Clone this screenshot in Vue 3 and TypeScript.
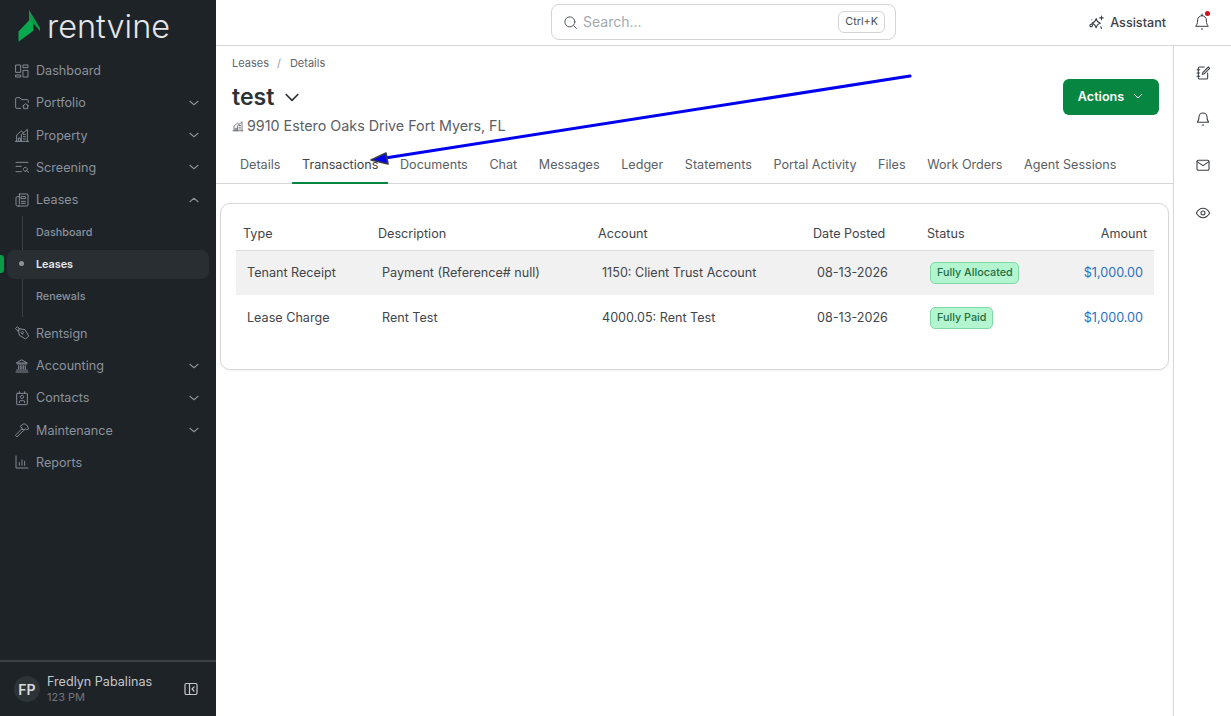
<script setup lang="ts">
// Lease details page, Transactions tab.

interface NavItem {
  label: string;
  icon: string;
  chevron?: "down" | "up";
  children?: { label: string; active?: boolean }[];
}

const icons: Record<string, string> = {
  dashboard: "M3 3h7v11H3zM3 18h7v3H3zM14 3h7v4h-7zM14 11h7v10h-7z",
  portfolio:
    "M10 20H4a1.500 1.500 0 0 1-1.500-1.500v-13A1.500 1.500 0 0 1 4 4h5l2.500 3H20a1.500 1.500 0 0 1 1.500 1.500V11M13 16.500l4.500-3.500 4.500 3.500M14.500 15.500V20.500h6v-5",
  property:
    "M2 21.500h20M4 21.500V12l7-6 3 2.500M6.500 21.500v-5h3v5M11 21.500v-10l9-8v18M14 11h3M14 14.500h3M14 18h3",
  screening:
    "M3 5h18M3 11h8M3 19h8M17 18.500a3 3 0 1 0-.01 0M19.300 17.500 22 20",
  leases:
    "M8 3h11.500A1.500 1.500 0 0 1 21 4.500v15a1.500 1.500 0 0 1-1.500 1.500H6.500M8 3v15M8 21H5a2 2 0 0 1-2-2V9a2 2 0 0 1 2-2h3M11 7h6v3h-6zM11 14h6M11 17h6",
  rentsign:
    "M2.500 5 5 2.500 9 6.500 6.500 9zM7.500 5.500l9 1.500 5.500 9.500-4.500 4.500-9.500-5.500L6.500 7M12.500 13.500a1.800 1.800 0 1 0-.01 0",
  accounting:
    "M3 21h18M4 18h16M5 9h14M12 3l8 4.500H4zM7 11.500V16M12 11.500V16M17 11.500V16M9.500 11.500V16M14.500 11.500V16",
  contacts:
    "M5 5h14a1 1 0 0 1 1 1v15a1 1 0 0 1-1 1H5a1 1 0 0 1-1-1V6a1 1 0 0 1 1-1zM8 2.500V5M16 2.500V5M12 13a2.500 2.500 0 1 0-.01 0M8 19v-1a2 2 0 0 1 2-2h4a2 2 0 0 1 2 2v1",
  maintenance:
    "M2.500 19.500 12 10l2.500 2.500L5 22zM10 6l4-3c3-.5 5 1 6 3l2 4-3 2-2-2-2 2z",
  reports: "M3 3v18h18M8 17v-4M12 17V9M16 17v-6",
};

const nav: NavItem[] = [
  { label: "Dashboard", icon: "dashboard" },
  { label: "Portfolio", icon: "portfolio", chevron: "down" },
  { label: "Property", icon: "property", chevron: "down" },
  { label: "Screening", icon: "screening", chevron: "down" },
  {
    label: "Leases",
    icon: "leases",
    chevron: "up",
    children: [
      { label: "Dashboard" },
      { label: "Leases", active: true },
      { label: "Renewals" },
    ],
  },
  { label: "Rentsign", icon: "rentsign" },
  { label: "Accounting", icon: "accounting", chevron: "down" },
  { label: "Contacts", icon: "contacts", chevron: "down" },
  { label: "Maintenance", icon: "maintenance", chevron: "down" },
  { label: "Reports", icon: "reports" },
];

const tabs = [
  "Details",
  "Transactions",
  "Documents",
  "Chat",
  "Messages",
  "Ledger",
  "Statements",
  "Portal Activity",
  "Files",
  "Work Orders",
  "Agent Sessions",
];

const rows = [
  {
    type: "Tenant Receipt",
    description: "Payment (Reference# null)",
    account: "1150: Client Trust Account",
    date: "08-13-2026",
    status: "Fully Allocated",
    amount: "$1,000.00",
  },
  {
    type: "Lease Charge",
    description: "Rent Test",
    account: "4000.05: Rent Test",
    date: "08-13-2026",
    status: "Fully Paid",
    amount: "$1,000.00",
  },
];
</script>

<template>
  <div class="app">
    <aside class="sidebar">
      <div class="logo">
        <svg class="logo-mark" width="23" height="32" viewBox="0 0 23 32">
          <path d="M11 0V10.500L.5 21.500V31.700L15.300 20.700V13.300Z" fill="#0aa84f" />
          <path d="M11 0 22 18V21L15.300 13.300 11 10.500Z" fill="#0b9c4a" />
        </svg>
        <span class="logo-text">rentvine</span>
      </div>
      <nav class="nav">
        <template v-for="item in nav" :key="item.label">
          <div class="nav-item">
            <svg class="nav-icon" width="16" height="16" viewBox="0 0 24 24">
              <path :d="icons[item.icon]" />
            </svg>
            <span class="nav-label">{{ item.label }}</span>
            <svg v-if="item.chevron" class="nav-chevron" width="14" height="14" viewBox="0 0 24 24">
              <path :d="item.chevron === 'down' ? 'M5 9l7 6 7-6' : 'M5 15l7-6 7 6'" />
            </svg>
          </div>
          <div v-if="item.children" class="subnav">
            <div
              v-for="child in item.children"
              :key="child.label"
              :class="['sub-item', { active: child.active }]"
            >
              <span v-if="child.active" class="sub-marker"></span>
              <span v-if="child.active" class="sub-dot"></span>
              {{ child.label }}
            </div>
          </div>
        </template>
      </nav>
      <div class="user">
        <div class="avatar">FP</div>
        <div class="user-text">
          <div class="user-name">Fredlyn Pabalinas</div>
          <div class="user-time">123 PM</div>
        </div>
        <svg class="collapse" width="14" height="14" viewBox="0 0 14 14">
          <rect x="1" y="1.500" width="12" height="11" rx="1.200" />
          <path d="M5.500 1.500v11M10 5 8 7l2 2" />
        </svg>
      </div>
    </aside>

    <div class="main">
      <header class="topbar">
        <div class="search">
          <svg class="search-icon" width="15" height="15" viewBox="0 0 24 24">
            <circle cx="11" cy="11" r="8" />
            <path d="M17 17l4.500 4.500" />
          </svg>
          <span class="search-text">Search...</span>
          <span class="kbd">Ctrl+K</span>
        </div>
        <div class="top-actions">
          <div class="assistant">
            <svg width="17" height="17" viewBox="0 0 24 24">
              <path d="M11.500 6.500c.8 4 2.200 5.400 6 6.500-3.800 1.100-5.200 2.500-6 6.500-.8-4-2.200-5.400-6-6.500 3.800-1.100 5.200-2.500 6-6.500zM19 3v5M16.500 5.500h5M4.500 18a1.800 1.800 0 1 0-.01 0M5.500 8v.01M18 18l1 2.500" />
            </svg>
            Assistant
          </div>
          <div class="bell">
            <svg width="16" height="18" viewBox="0 0 24 27">
              <path d="M12 4a6.500 6.500 0 0 1 6.500 6.500c0 5.500 1.500 7.500 3 9.500h-19c1.500-2 3-4 3-9.500A6.500 6.500 0 0 1 12 4zM12 1.500V4M11 24h2" />
            </svg>
            <span class="bell-dot"></span>
          </div>
        </div>
      </header>

      <div class="body">
        <main class="content">
          <div class="head">
            <div class="crumbs">
              <span>Leases</span>
              <span class="crumb-sep">/</span>
              <span>Details</span>
            </div>
            <div class="title-row">
              <div>
                <div class="title">
                  test
                  <svg width="20" height="20" viewBox="0 0 24 24"><path d="M5 9l7 7 7-7" /></svg>
                </div>
                <div class="address">
                  <svg width="12" height="12" viewBox="0 0 24 24">
                    <path d="M2 21.500h20M4 21.500V12l7-6 3 2.500M6.500 21.500v-5h3v5M11 21.500v-10l9-8v18M14 11h3M14 14.500h3M14 18h3" />
                  </svg>
                  9910 Estero Oaks Drive Fort Myers, FL
                </div>
              </div>
              <button class="actions">
                Actions
                <svg width="12" height="12" viewBox="0 0 24 24"><path d="M5 9l7 7 7-7" /></svg>
              </button>
            </div>
          </div>

          <div class="tabs">
            <div v-for="tab in tabs" :key="tab" :class="['tab', { active: tab === 'Transactions' }]">
              {{ tab }}
            </div>
          </div>

          <section class="card">
            <table class="table">
              <colgroup>
                <col style="width: 135px" />
                <col style="width: 220px" />
                <col style="width: 215px" />
                <col style="width: 114px" />
                <col />
              </colgroup>
              <thead>
                <tr>
                  <th>Type</th>
                  <th>Description</th>
                  <th>Account</th>
                  <th>Date Posted</th>
                  <th>Status</th>
                  <th class="right">Amount</th>
                </tr>
              </thead>
              <tbody>
                <tr v-for="row in rows" :key="row.type">
                  <td>{{ row.type }}</td>
                  <td>{{ row.description }}</td>
                  <td>{{ row.account }}</td>
                  <td>{{ row.date }}</td>
                  <td><span class="pill">{{ row.status }}</span></td>
                  <td class="right amount">{{ row.amount }}</td>
                </tr>
              </tbody>
            </table>
          </section>
        </main>

        <aside class="rail">
          <svg width="16" height="16" viewBox="0 0 24 24">
            <path d="M14 3H7a2 2 0 0 0-2 2v14a2 2 0 0 0 2 2h10a2 2 0 0 0 2-2v-7M3 7h4M3 12h4M3 17h4M20 3l2 2-8 8-3 1 1-3z" />
          </svg>
          <svg width="16" height="16" viewBox="0 0 24 24">
            <path d="M12 3a6 6 0 0 1 6 6c0 5 2 7 2.500 8h-17C4 16 6 14 6 9a6 6 0 0 1 6-6zM11 21h2" />
          </svg>
          <svg width="16" height="16" viewBox="0 0 24 24">
            <rect x="3" y="5" width="18" height="15" rx="2" />
            <path d="M3 7l9 6 9-6" />
          </svg>
          <svg width="16" height="16" viewBox="0 0 24 24">
            <path d="M2 12c2.500-4.500 6-7 10-7s7.500 2.500 10 7c-2.500 4.500-6 7-10 7s-7.500-2.500-10-7z" />
            <circle cx="12" cy="12" r="3" />
          </svg>
        </aside>
      </div>
    </div>

    <!-- annotation drawn over the screenshot -->
    <svg class="arrow" width="1231" height="716" viewBox="0 0 1231 716">
      <path d="M910 76 382 158.500" stroke="#0000f0" stroke-width="3" fill="none" />
      <path d="M371 160 386 153 388 164Z" fill="#0000f0" />
    </svg>
  </div>
</template>

<style>
html,
body {
  margin: 0;
  background: #fff;
}
</style>

<style scoped>
.app {
  position: relative;
  display: flex;
  width: 1231px;
  height: 716px;
  overflow: hidden;
  font-family: Inter, "Liberation Sans", sans-serif;
  font-size: 12.6px;
  color: #3a3f45;
}
svg {
  fill: none;
  stroke: currentColor;
  stroke-width: 1.6;
  stroke-linecap: round;
  stroke-linejoin: round;
  flex: none;
}

/* sidebar */
.sidebar {
  width: 216px;
  flex: none;
  background: #1e2328;
  display: flex;
  flex-direction: column;
  color: #8b929c;
}
.logo {
  height: 54.4px;
  display: flex;
  align-items: center;
  padding-left: 18px;
  gap: 6px;
}
.logo-mark {
  stroke: none;
  margin-top: -2px;
}
.logo-text {
  font-weight: 300;
  font-size: 32.5px;
  color: #e4e6e8;
  line-height: 1;
}
.nav {
  flex: 1;
}
.nav-item {
  height: 32.3px;
  display: flex;
  align-items: center;
  padding: 0 15px 0 14px;
}
.nav-icon {
  stroke-width: 1.4;
}
.nav-label {
  margin-left: 6px;
  flex: 1;
}
.nav-chevron {
  stroke-width: 1.8;
}
.subnav {
  margin-left: 22px;
  border-left: 1px solid #3a3f45;
  padding-bottom: 4.6px;
  font-size: 10.8px;
  font-weight: 500;
}
.sub-item {
  position: relative;
  height: 32.3px;
  line-height: 34px;
  padding-left: 13px;
}
.sub-item.active {
  color: #e8eaec;
  font-weight: 600;
  background: #292e33;
  border-radius: 8px;
  height: 29px;
  line-height: 29px;
  margin: 2px 7px 1px -16px;
  padding-left: 29px;
}
.sub-dot {
  position: absolute;
  left: 12px;
  top: 11px;
  width: 5px;
  height: 5px;
  border-radius: 50%;
  background: #8b929c;
}
.sub-marker {
  position: absolute;
  left: -7px;
  top: 5px;
  width: 4px;
  height: 18px;
  border-radius: 0 3px 3px 0;
  background: #0a9a48;
}
.user {
  height: 54px;
  border-top: 2px solid #3c4146;
  display: flex;
  align-items: center;
  padding: 0 18px 0 14px;
}
.avatar {
  width: 26px;
  height: 26px;
  border-radius: 50%;
  background: #2c3438;
  color: #d8dadc;
  font-size: 14px;
  font-weight: 600;
  display: flex;
  align-items: center;
  justify-content: center;
}
.user-text {
  flex: 1;
  margin-left: 7px;
}
.user-name {
  font-size: 12.6px;
  font-weight: 400;
  color: #c4c7cb;
  line-height: 16px;
}
.user-time {
  font-size: 11px;
  color: #70767e;
  line-height: 14px;
}
.collapse {
  color: #c4c7cb;
  stroke-width: 1.2;
}

/* top bar */
.main {
  flex: 1;
  min-width: 0;
  display: flex;
  flex-direction: column;
}
.topbar {
  height: 44px;
  padding: 0 21px 1px 335px;
  flex: none;
  border-bottom: 1px solid #d6d6d6;
  display: flex;
  align-items: center;
  justify-content: space-between;
}
.search {
  width: 345px;
  height: 36px;
  box-sizing: border-box;
  border: 1px solid #d4d4d4;
  border-radius: 8px;
  display: flex;
  align-items: center;
  padding: 0 10px 0 11px;
}
.search-icon {
  color: #555b62;
}
.search-text {
  flex: 1;
  margin-left: 5px;
  margin-bottom: 2px;
  font-size: 14px;
  color: #a3a9ae;
}
.kbd {
  border: 1px solid #d4d4d4;
  border-radius: 6px;
  font-size: 10.8px;
  font-weight: 400;
  color: #4a4f55;
  padding: 3px 6px;
  line-height: 14px;
}
.top-actions {
  display: flex;
  align-items: center;
  gap: 28px;
}
.assistant {
  display: flex;
  align-items: center;
  gap: 5px;
  font-weight: 500;
  color: #3a3f45;
}
.assistant svg {
  stroke-width: 1.5;
}
.bell {
  position: relative;
  display: flex;
  color: #3a3f45;
}
.bell svg {
  stroke-width: 1.5;
}
.bell-dot {
  position: absolute;
  right: 0;
  top: -2px;
  width: 5px;
  height: 5px;
  border-radius: 50%;
  background: #d0101a;
}

/* page */
.body {
  flex: 1;
  display: flex;
  min-height: 0;
}
.content {
  flex: 1;
  min-width: 0;
}
.head {
  padding: 11px 14px 0 16px;
}
.crumbs {
  display: flex;
  gap: 6px;
  font-size: 11px;
  line-height: 13px;
  color: #5f656c;
}
.crumb-sep {
  color: #999;
  margin: 0 3px 0 2px;
}
.title-row {
  display: flex;
  justify-content: space-between;
  align-items: flex-start;
}
.title {
  display: flex;
  align-items: center;
  gap: 8px;
  margin-top: 11px;
  font-size: 23px;
  font-weight: 600;
  line-height: 32px;
  color: #2d3237;
}
.title svg {
  stroke-width: 2;
}
.address {
  display: flex;
  align-items: center;
  gap: 3px;
  margin-top: 3px;
  font-size: 14.3px;
  line-height: 20px;
  color: #5a6067;
}
.actions {
  margin-top: 9px;
  width: 96px;
  height: 36px;
  border: 0;
  border-radius: 6px;
  background: #078641;
  color: #fff;
  font-family: inherit;
  font-size: 12.6px;
  font-weight: 600;
  display: flex;
  align-items: center;
  justify-content: center;
  gap: 8px;
  padding-bottom: 3px;
}
.actions svg {
  stroke-width: 2;
}
.tabs {
  display: flex;
  gap: 1.6px;
  margin-top: 12px;
  padding-left: 14px;
  border-bottom: 1px solid #d6d6d6;
}
.tab {
  height: 36px;
  line-height: 34px;
  padding: 0 10px;
  color: #5a6067;
  margin-bottom: -1px;
  box-sizing: border-box;
}
.tab.active {
  color: #3f454b;
  border-bottom: 2px solid #078641;
}
.card {
  margin: 19px 4px 0 4px;
  height: 167px;
  box-sizing: border-box;
  border: 1px solid #d6d6d6;
  border-radius: 10px;
  padding: 13px 14px 0 15px;
  box-shadow: 0 1px 2px rgba(0, 0, 0, 0.05);
}
.table {
  width: 100%;
  border-collapse: collapse;
  table-layout: fixed;
  color: #3f454b;
}
th {
  height: 33px;
  padding: 0 7px;
  font-weight: 400;
  text-align: left;
  border-bottom: 1px solid #dcdcdc;
}
td {
  padding: 0 11px 1px;
}
tbody tr:first-child td {
  height: 43px;
  background: #f1f1f1;
}
tbody tr:last-child td {
  height: 44px;
}
tbody tr:last-child .pill {
  margin-top: 2px;
}
.right {
  text-align: right;
}
.amount {
  color: #1f6fc4;
}
.pill {
  display: inline-block;
  margin-left: -1px;
  padding: 0 5.5px 0 6px;
  height: 22px;
  line-height: 20px;
  box-sizing: border-box;
  border: 1px solid #7ed9a5;
  border-radius: 5px;
  background: #b2f5cf;
  color: #1f6e44;
  font-size: 10.8px;
  font-weight: 500;
}
.rail {
  width: 57px;
  flex: none;
  border-left: 1px solid #d6d6d6;
  display: flex;
  flex-direction: column;
  align-items: center;
  gap: 30px;
  padding-top: 19px;
  color: #3a3f45;
}
.rail svg:last-child {
  margin-top: 2px;
}
.arrow {
  position: absolute;
  left: 0;
  top: 0;
  pointer-events: none;
}
</style>
